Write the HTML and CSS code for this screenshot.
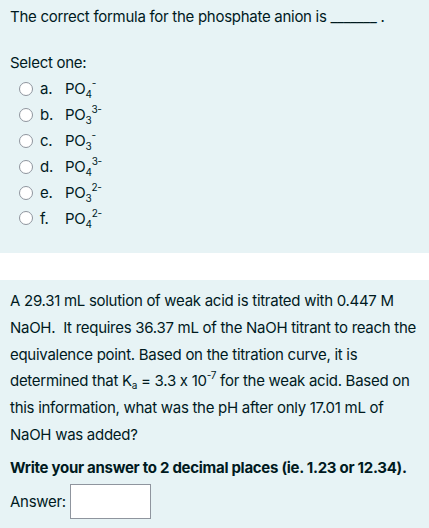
FILE: index.html
```html
<!DOCTYPE html>
<html>
<head>
<meta charset="utf-8">
<link rel="stylesheet" href="styles.css">
</head>
<body>
<div class="q q1">
  <p class="text">The correct formula for the phosphate anion is _______ .</p>
  <p class="prompt">Select one:</p>
  <div class="answers">
    <div class="opt"><span class="radio"></span><span class="lbl">a.</span><span class="f">PO<sub>4</sub><sup>-</sup></span></div>
    <div class="opt"><span class="radio"></span><span class="lbl">b.</span><span class="f">PO<sub>3</sub><sup>3-</sup></span></div>
    <div class="opt"><span class="radio"></span><span class="lbl">c.</span><span class="f">PO<sub>3</sub><sup>-</sup></span></div>
    <div class="opt"><span class="radio"></span><span class="lbl">d.</span><span class="f">PO<sub>4</sub><sup>3-</sup></span></div>
    <div class="opt"><span class="radio"></span><span class="lbl">e.</span><span class="f">PO<sub>3</sub><sup>2-</sup></span></div>
    <div class="opt"><span class="radio"></span><span class="lbl">f.</span><span class="f">PO<sub>4</sub><sup>2-</sup></span></div>
  </div>
</div>
<div class="q q2">
  <p class="text2">A 29.31 mL solution of weak acid is titrated with 0.447 M NaOH.&nbsp; It requires 36.37 mL of the NaOH titrant to reach the equivalence point. Based on the titration curve, it is determined that K<sub class="ka">a</sub> = 3.3 x 10<sup class="exp">-7</sup> for the weak acid. Based on this information, what was the pH after only 17.01 mL of NaOH was added?</p>
  <p class="bold">Write your answer to 2 decimal places (ie. 1.23 or 12.34).</p>
  <div class="ans"><span>Answer:</span><span class="input"></span></div>
</div>
</body>
</html>
```
FILE: styles.css
```css
html, body { margin: 0; padding: 0; background: #ffffff; }
body {
  font-family: Inter, "Noto Sans", sans-serif;
  font-size: 15px;
  letter-spacing: -0.28px;
  font-feature-settings: "calt" 0;
  color: #001a1e;
}
p { margin: 0; }
.q { background: #e7f3f5; padding: 0 10px; }
.q1 { height: 253px; padding-top: 6px; box-sizing: border-box; }
.text { line-height: 22px; }
.prompt { margin-top: 24px; line-height: 22px; }
.answers { padding-left: 9px; margin-top: 2px; }
.opt { display: flex; align-items: center; height: 25.9px; }
.radio {
  width: 14px; height: 14px; border: 1px solid #8f959e; border-radius: 50%;
  background: #fff; box-sizing: border-box; margin-right: 7px;
}
.lbl { width: 25px; }
.f sub { font-size: 10px; vertical-align: -4px; line-height: 0; }
.f sup { font-size: 10px; vertical-align: 7px; line-height: 0; }
.q2 { margin-top: 27px; height: 248px; padding-top: 8px; box-sizing: border-box; }
.text2 { line-height: 26.8px; }
.ka { font-size: 10px; vertical-align: -3px; line-height: 0; }
.exp { font-size: 10px; vertical-align: 7px; line-height: 0; }
.bold { font-weight: 700; margin-top: 6px; line-height: 26px; }
.ans { display: flex; align-items: center; margin-top: 3px; gap: 4px; }
.input { width: 81px; height: 35px; border: 1px solid #8f959e; background: #fff; box-sizing: border-box; }
```
